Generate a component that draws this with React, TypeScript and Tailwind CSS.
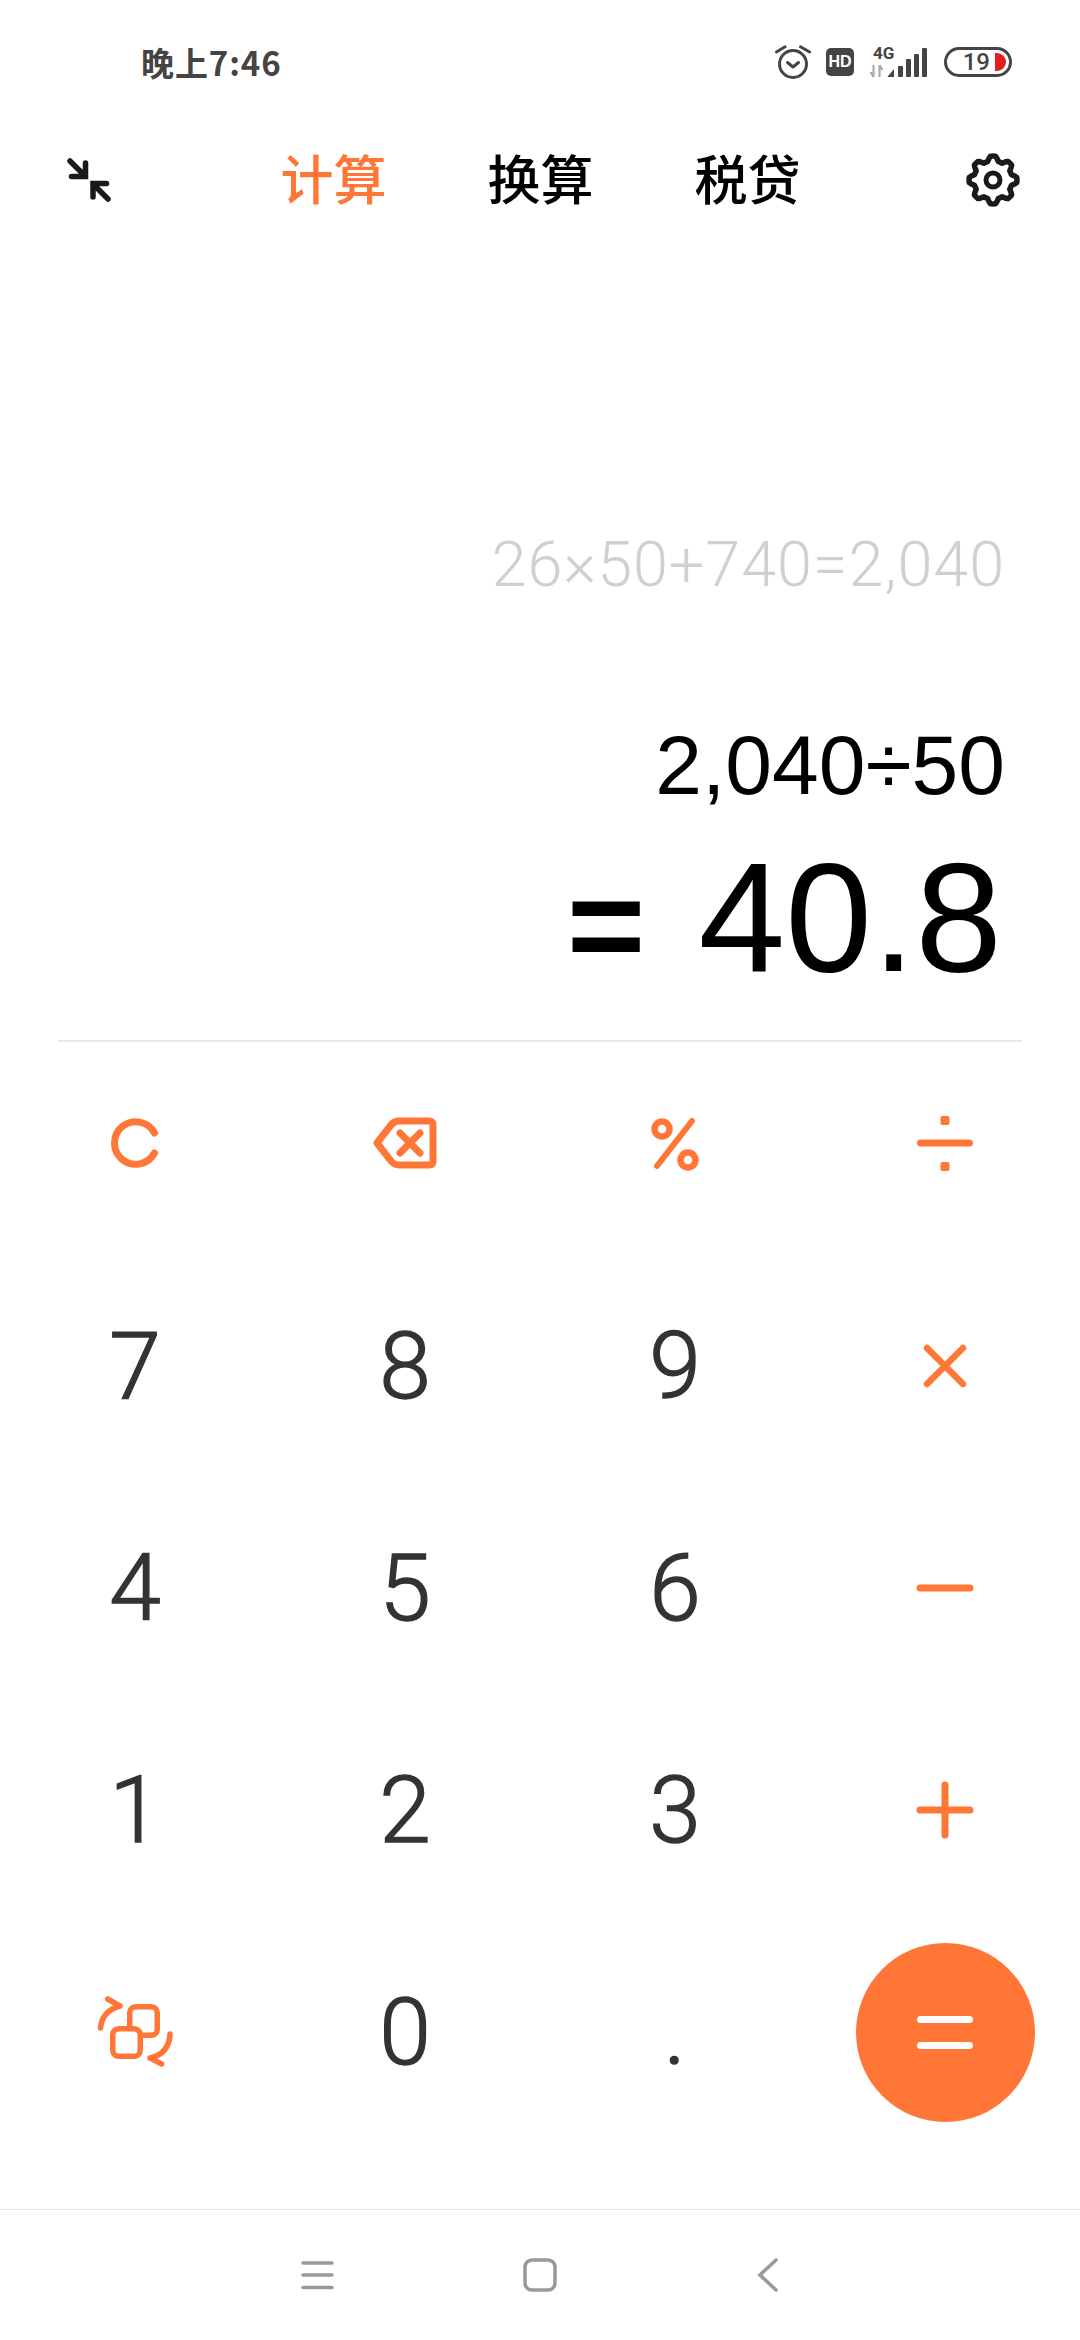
import type { ReactNode } from "react"

const ORANGE = "#ff7636"

// 8-tooth gear outline, sampled as a wavy circle
function gearPath(cx: number, cy: number) {
  const pts: string[] = []
  for (let i = 0; i < 240; i++) {
    const a = (i / 240) * Math.PI * 2
    const wave = Math.max(-1, Math.min(1, Math.cos(a * 8) * 1.5))
    const r = 21.5 + 2.4 * wave
    pts.push(`${(cx + r * Math.cos(a)).toFixed(2)},${(cy + r * Math.sin(a)).toFixed(2)}`)
  }
  return "M" + pts.join("L") + "Z"
}

function Alarm() {
  return (
    <svg width="36" height="36" viewBox="0 0 36 36" fill="none" stroke="#444" strokeWidth="3" strokeLinecap="round" strokeLinejoin="round">
      <circle cx="18" cy="20" r="13.5" />
      <path d="M1.5 8L10 2.8M25.5 2.8L34.5 8" />
      <path d="M12.5 18.5L18 23L23.5 18.5" />
    </svg>
  )
}

function Signal() {
  return (
    <svg className="-mt-[4px]" width="60" height="38" viewBox="0 -4 60 38" fill="none">
      <text x="4" y="13.5" fontFamily="Roboto, sans-serif" fontWeight="700" fontSize="17" fill="#444">4G</text>
      <path d="M4.5 20V32M1.5 27L4.5 32M10.5 32V20M10.5 20L13.5 25" stroke="#aaa" strokeWidth="2.2" />
      <path d="M18.3 32L25 24V32Z" fill="#444" />
      <rect x="29" y="21" width="5" height="11" rx="1" fill="#444" />
      <rect x="37" y="14" width="5" height="18" rx="1" fill="#444" />
      <rect x="45" y="9" width="5" height="23" rx="1" fill="#444" />
      <rect x="53" y="3" width="5" height="29" rx="1" fill="#444" />
    </svg>
  )
}

function Battery() {
  return (
    <div className="flex h-[30px] w-[68px] items-center justify-end rounded-full border-[3px] border-[#444] pr-[3px]">
      <span className="mr-[5px] text-[24px] leading-none font-medium text-[#444] [font-family:Roboto,sans-serif]">19</span>
      <span className="h-[18px] w-[11px] rounded-r-full bg-[#e31c1c]"></span>
    </div>
  )
}

function StatusBar() {
  return (
    <div className="flex h-[123px] shrink-0 items-start justify-between pt-[42px] pr-[68px] pl-[141px]">
      <span className="text-[33px] leading-[40px] font-bold tracking-[0.9px] text-[#444] [font-family:'Noto_Sans_CJK_SC',sans-serif]">晚上7:46</span>
      <div className="mt-[2px] flex items-center gap-[15px]">
        <Alarm />
        <span className="flex h-[28px] w-[28px] items-center justify-center rounded-[5px] bg-[#444] text-[16px] leading-none font-bold text-white">HD</span>
        <Signal />
        <Battery />
      </div>
    </div>
  )
}

function TopNav() {
  return (
    <div className="flex h-[114px] shrink-0 items-center justify-between pr-[60px] pl-[66px]">
      <svg width="46" height="46" viewBox="0 0 46 46" fill="none" stroke="#1a1a1a" strokeWidth="5.5" strokeLinecap="round">
        <path d="M4 4L19 19M5.5 19.5H19.5V6" />
        <path d="M42 42L27 27M27 40V26.5H40.5" />
      </svg>
      <div className="mt-[3px] ml-[3px] flex gap-[101px] text-[53px] leading-[60px] font-medium text-black">
        <span className="text-[#ff7636]">计算</span>
        <span>换算</span>
        <span>税贷</span>
      </div>
      <svg width="54" height="54" viewBox="0 0 54 54" fill="none" stroke="#1a1a1a" strokeWidth="5.5" strokeLinejoin="round">
        <path d={gearPath(27, 27)} />
        <circle cx="27" cy="27" r="7" strokeWidth="5" />
      </svg>
    </div>
  )
}

function Display() {
  return (
    <div className="flex h-[803px] shrink-0 flex-col items-end pr-[79px] text-right">
      <div className="mt-[288px] -mr-[4px] text-[63px] leading-[80px] font-light tracking-[0.9px] text-[#d0d0d0] [font-family:Roboto,sans-serif]">26×50+740=2,040</div>
      <div className="mt-[110px] -mr-[4px] text-[84px] leading-[100px] text-black">2,040÷50</div>
      <div className="mt-[12px] -mr-[1px] text-[156px] leading-[180px] text-black">
        <span className="mr-[53px] text-[134px] font-bold">=</span>
        <span>40.8</span>
      </div>
    </div>
  )
}

function Key({ children, first }: { children: ReactNode; first?: boolean }) {
  return (
    <div className={`flex items-center justify-center ${first ? "h-[202px] self-start" : ""}`}>
      {children}
    </div>
  )
}

function Digit({ value }: { value: string }) {
  return (
    <Key>
      <span className="text-[93px] leading-none font-light text-[#333] [-webkit-text-stroke:1.4px_#333] [font-family:Roboto,sans-serif]">{value}</span>
    </Key>
  )
}

function OpIcon({ d, w = 60, h = 60, sw = 7 }: { d: string; w?: number; h?: number; sw?: number }) {
  return (
    <svg width={w} height={h} viewBox={`0 0 ${w} ${h}`} fill="none" stroke={ORANGE} strokeWidth={sw} strokeLinecap="round" strokeLinejoin="round">
      <path d={d} />
    </svg>
  )
}

function Keypad() {
  return (
    <div className="grid grid-cols-4 grid-rows-[213px_222px_222px_222px_222px]">
      <Key first>
        <svg width="60" height="60" viewBox="0 0 60 60" fill="none" stroke={ORANGE} strokeWidth="7" strokeLinecap="round">
          <path d="M49.5 20A21.25 21.25 0 1 0 49.5 40" />
        </svg>
      </Key>
      <Key first>
        <svg width="64" height="52" viewBox="0 0 64 52" fill="none" stroke={ORANGE} strokeWidth="7" strokeLinecap="round" strokeLinejoin="round">
          <path d="M4 26L18 8Q21 4 26 4H56Q60 4 60 8V44Q60 48 56 48H26Q21 48 18 44Z" />
          <path d="M27 16L47 36M47 16L27 36" />
        </svg>
      </Key>
      <Key first>
        <svg width="60" height="60" viewBox="0 0 60 60" fill="none" stroke={ORANGE} strokeWidth="6.5" strokeLinecap="round">
          <circle cx="17" cy="16" r="7.5" />
          <circle cx="43" cy="47" r="7.5" />
          <path d="M47 8L12 53" strokeWidth="6" />
        </svg>
      </Key>
      <Key first>
        <svg width="60" height="60" viewBox="0 0 60 60" fill={ORANGE}>
          <rect x="2" y="26.5" width="56" height="7" rx="3.5" />
          <rect x="25.5" y="3" width="9" height="9" rx="2" />
          <rect x="25.5" y="49" width="9" height="9" rx="2" />
        </svg>
      </Key>

      <Digit value="7" />
      <Digit value="8" />
      <Digit value="9" />
      <Key>
        <OpIcon d="M12 12L48 48M48 12L12 48" sw={6.5} />
      </Key>

      <Digit value="4" />
      <Digit value="5" />
      <Digit value="6" />
      <Key>
        <OpIcon d="M5 30H55" />
      </Key>

      <Digit value="1" />
      <Digit value="2" />
      <Digit value="3" />
      <Key>
        <OpIcon d="M5 30H55M30 5V55" />
      </Key>

      <Key>
        <svg width="80" height="72" viewBox="0 0 80 72" fill="none" stroke={ORANGE} strokeWidth="5.5" strokeLinecap="round" strokeLinejoin="round">
          <rect x="34.75" y="10.75" width="27.5" height="28.5" rx="6" />
          <rect x="17.75" y="32.75" width="27.5" height="27.5" rx="6" fill="#fff" />
          <path d="M5.5 32Q7 15 25 10M12.7 3L25 10" />
          <path d="M75 38Q74 58 55 62M66.7 68L55 62" />
        </svg>
      </Key>
      <Digit value="0" />
      <Digit value="." />
      <Key>
        <div className="flex h-[179px] w-[179px] flex-col items-center justify-center gap-[19px] rounded-full bg-[#ff7636]">
          <span className="h-[7px] w-[56px] rounded-full bg-white"></span>
          <span className="h-[7px] w-[56px] rounded-full bg-white"></span>
        </div>
      </Key>
    </div>
  )
}

function NavBar() {
  return (
    <div className="mt-auto flex h-[131px] items-center justify-between border-t border-[#e8e8e8] px-[300px]">
      <svg width="34" height="30" viewBox="0 0 34 30" fill="none" stroke="#999" strokeWidth="3.5" strokeLinecap="round">
        <path d="M3 3H32M3 15H32M3 27.5H32" />
      </svg>
      <svg width="34" height="34" viewBox="0 0 34 34" fill="none" stroke="#999" strokeWidth="3.5">
        <rect x="2" y="2" width="30" height="30" rx="7" />
      </svg>
      <svg width="34" height="34" viewBox="0 0 34 34" fill="none" stroke="#999" strokeWidth="3.5" strokeLinecap="round">
        <path d="M30 2L14 17L30 32" />
      </svg>
    </div>
  )
}

export default function App() {
  return (
    <div className="flex h-[2340px] w-[1080px] flex-col overflow-hidden bg-white [font-family:'Liberation_Sans','Noto_Sans_CJK_SC',sans-serif]">
      <StatusBar />
      <TopNav />
      <Display />
      <div className="mx-[58px] h-[2px] shrink-0 bg-[#e8e8e8]"></div>
      <Keypad />
      <NavBar />
    </div>
  )
}
